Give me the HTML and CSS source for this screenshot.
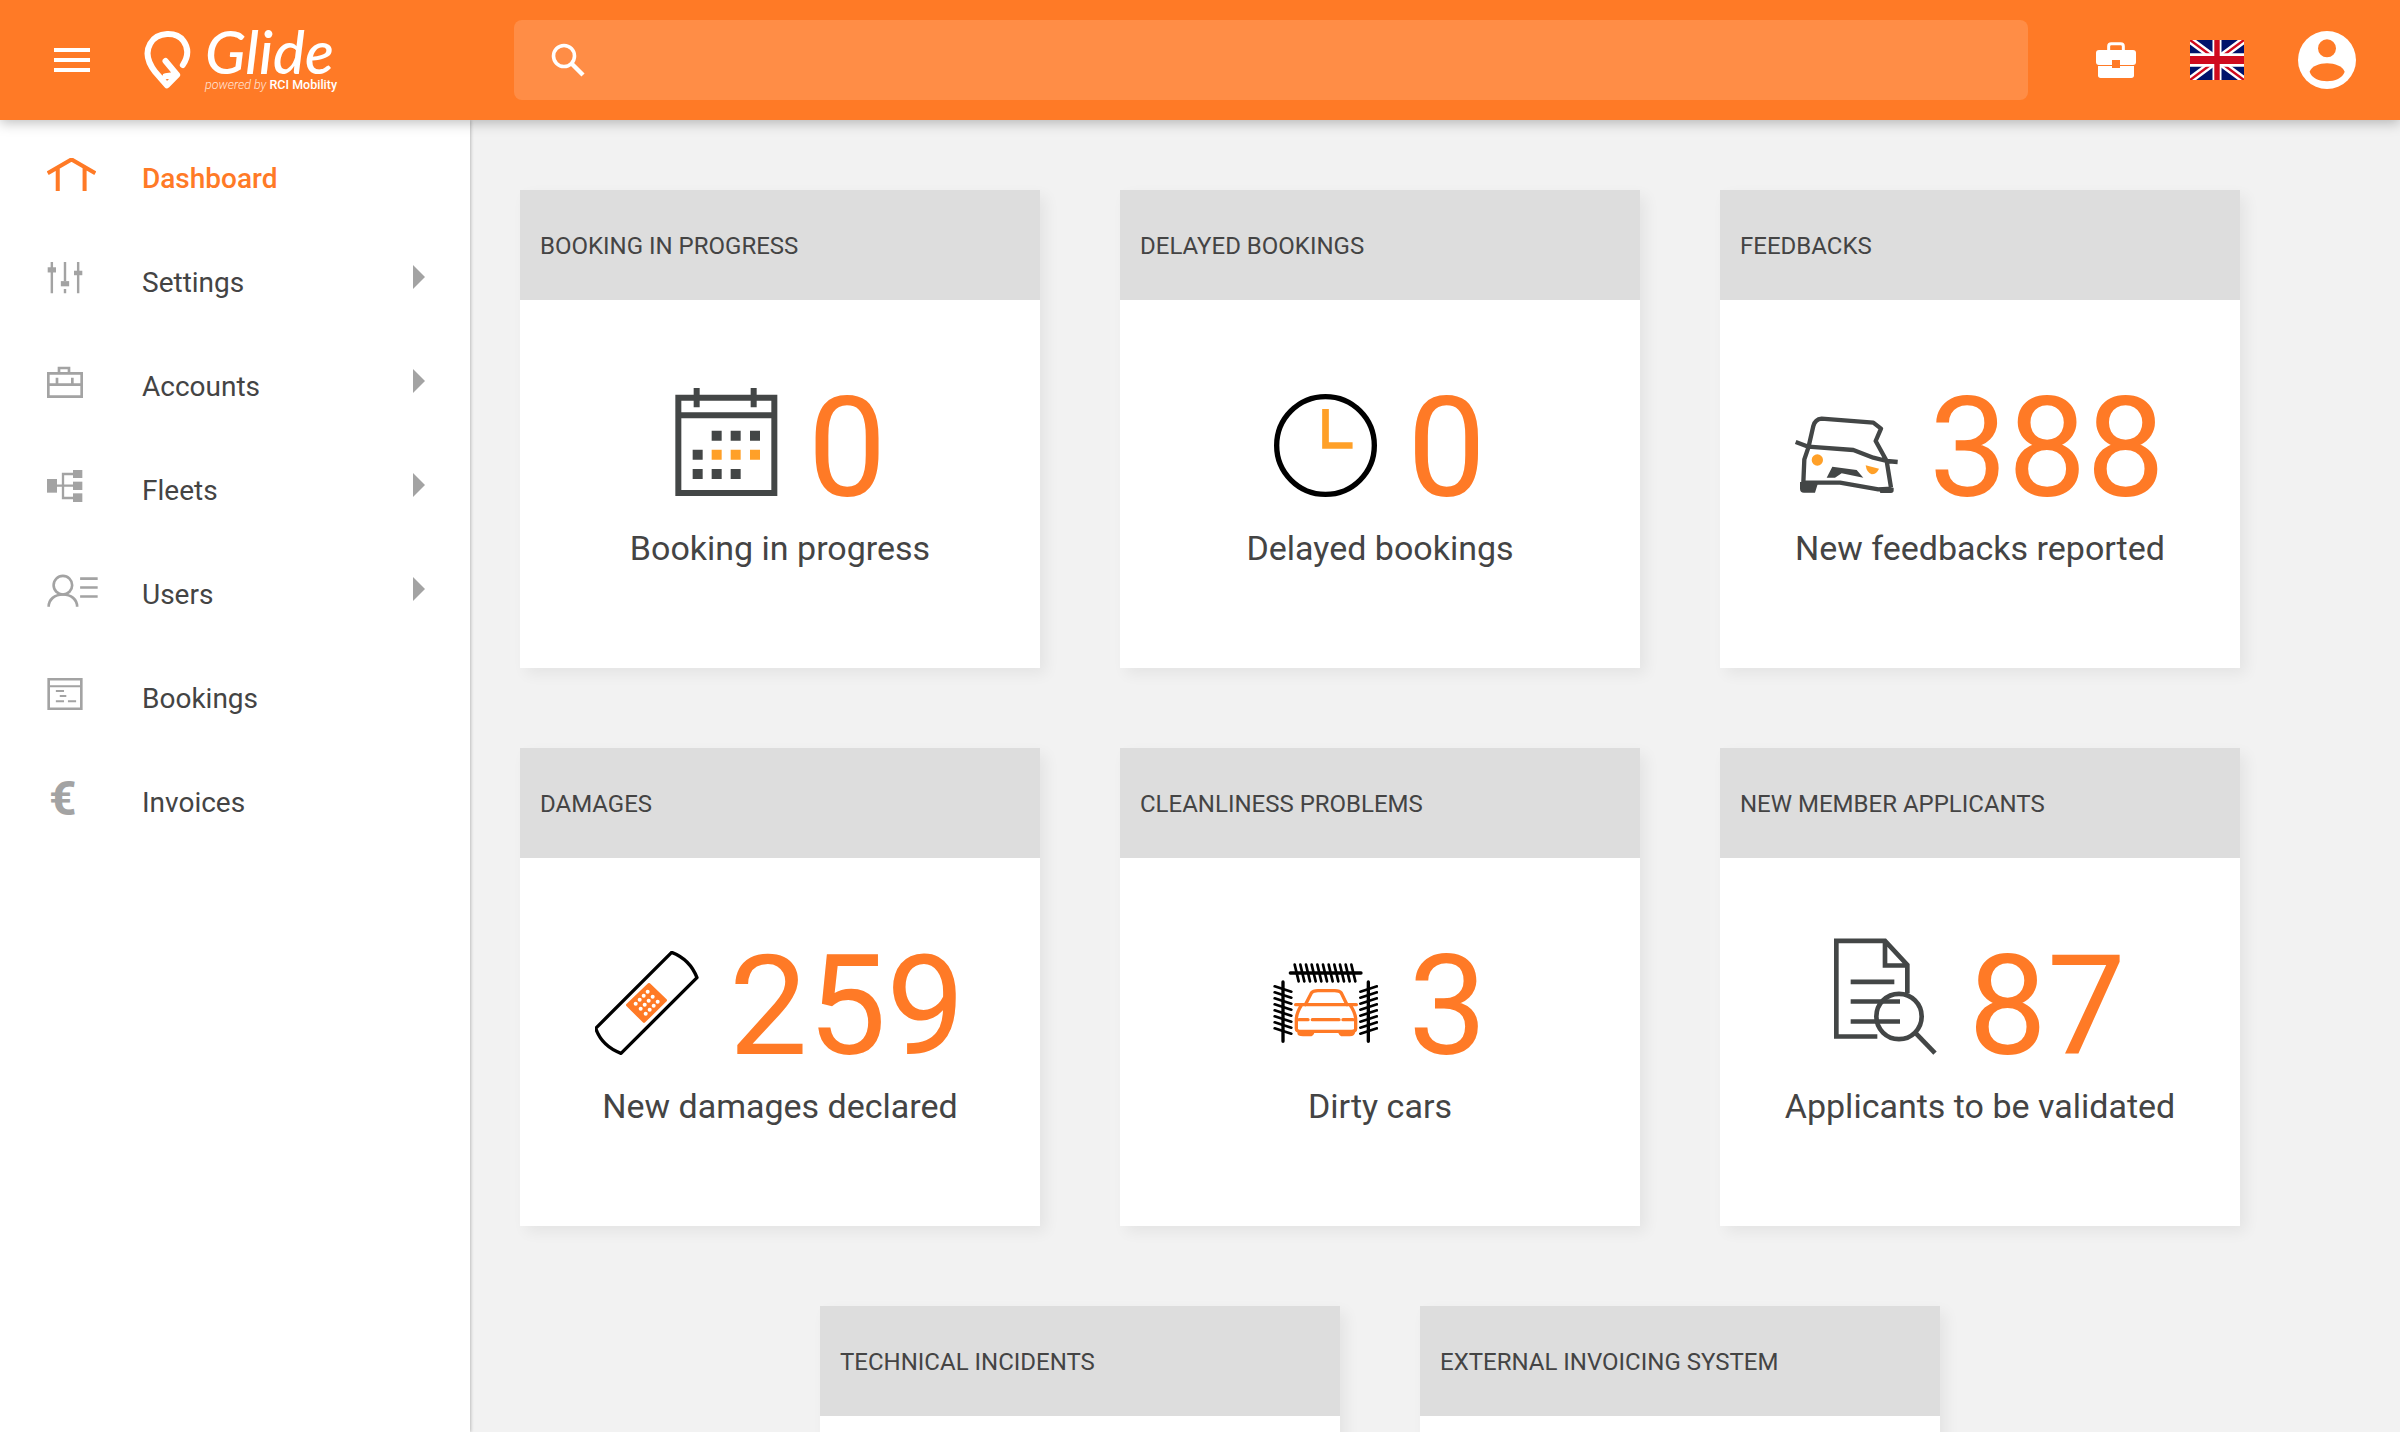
FILE: index.html
```html
<!DOCTYPE html>
<html>

<head>
	<meta charset="utf-8">
	<title>Glide</title>
	<link rel="stylesheet" href="styles.css">
</head>

<body>
	<header class="topbar">
		<div class="burger"><span></span><span></span><span></span></div>
		<div class="logo">
			<svg class="logo-pin" viewBox="432 90 140 180">
				<path d="M548 198C566 170 566 148 550 126C530 98 472 96 450 134C434 162 444 192 466 220L500 259L531 228L496 186M496 232L524 228" fill="none" stroke="#fff" stroke-width="18" stroke-linecap="round" stroke-linejoin="round"/>
			</svg>
			<div class="logo-text">
				<div class="logo-name">Glide</div>
				<div class="logo-sub"><i>powered by</i> <b>RCI Mobility</b></div>
			</div>
		</div>
		<div class="search">
			<svg class="search-icon" viewBox="0 0 34 34">
				<circle cx="13" cy="13" r="10.5" fill="none" stroke="#fff" stroke-width="3.6"/>
				<path d="M20.5 20.5L32 32" stroke="#fff" stroke-width="4.4"/>
			</svg>
		</div>
		<svg class="top-case" viewBox="438 126 120 108">
			<path d="M476 152V139Q476 131 484 131H512Q520 131 520 139V152" fill="none" stroke="#fff" stroke-width="9"/>
			<rect x="438" y="150" width="120" height="45" rx="9" fill="#fff"/>
			<path d="M444 198H552V226Q552 234 544 234H452Q444 234 444 226Z" fill="#fff"/>
			<rect x="486" y="180" width="24" height="24" fill="#ff7a26"/>
		</svg>
		<svg class="flag" viewBox="0 0 60 30" preserveAspectRatio="none">
			<rect width="60" height="30" fill="#00126b"/>
			<path d="M0 0L60 30M60 0L0 30" stroke="#fff" stroke-width="6"/>
			<path d="M0 0L30 15M60 30L30 15M60 0L30 15M0 30L30 15" stroke="#cf0a1e" stroke-width="2"/>
			<path d="M30 0V30M0 15H60" stroke="#fff" stroke-width="10"/>
			<path d="M30 0V30M0 15H60" stroke="#cf0a1e" stroke-width="6"/>
		</svg>
		<svg class="avatar" viewBox="1044 90 174 174">
			<circle cx="1131" cy="177" r="87" fill="#fff"/>
			<circle cx="1131" cy="142" r="27" fill="#ff7a26"/>
			<path d="M1079 212C1090 178 1172 178 1184 212C1172 250 1090 250 1079 212Z" fill="#ff7a26"/>
		</svg>
	</header>

	<div class="page">
		<nav class="sidebar">
			<a class="nav-item active">
				<span class="nav-icon">
					<svg class="ico-home" viewBox="85 85 146 98">
						<path d="M87 130L158 89L229 130M117 112V183M197 112V183" fill="none" stroke="#ff7a26" stroke-width="12"/>
					</svg>
				</span>
				<span class="nav-label">Dashboard</span>
			</a>
			<a class="nav-item">
				<span class="nav-icon">
					<svg class="ico-gray" viewBox="80 400 104 92">
						<path d="M94 400V490M132 400V455M132 478V490M170 400V490" fill="none" stroke="#a3a3a3" stroke-width="7"/>
						<rect x="82" y="415" width="24" height="15" fill="#a3a3a3"/>
						<rect x="120" y="455" width="24" height="15" fill="#a3a3a3"/>
						<rect x="158" y="425" width="24" height="13" fill="#a3a3a3"/>
					</svg>
				</span>
				<span class="nav-label">Settings</span>
				<span class="nav-arrow"></span>
			</a>
			<a class="nav-item">
				<span class="nav-icon">
					<svg class="ico-gray" viewBox="82 710 108 96">
						<path d="M86 732H186V802H86ZM118 732V716H148V732M88 766H184M112 745V762M158 745V762" fill="none" stroke="#a3a3a3" stroke-width="8"/>
					</svg>
				</span>
				<span class="nav-label">Accounts</span>
				<span class="nav-arrow"></span>
			</a>
			<a class="nav-item">
				<span class="nav-icon">
					<svg class="ico-gray" viewBox="82 60 108 96">
						<path d="M112 107H160M160 72H130V144H160" fill="none" stroke="#a3a3a3" stroke-width="7"/>
						<rect x="82" y="87" width="30" height="41" fill="#a3a3a3"/>
						<rect x="160" y="60" width="28" height="24" fill="#a3a3a3"/>
						<rect x="160" y="95" width="28" height="25" fill="#a3a3a3"/>
						<rect x="160" y="130" width="28" height="26" fill="#a3a3a3"/>
					</svg>
				</span>
				<span class="nav-label">Fleets</span>
				<span class="nav-arrow"></span>
			</a>
			<a class="nav-item">
				<span class="nav-icon">
					<svg class="ico-users" viewBox="82 372 154 98">
						<circle cx="130" cy="405" r="28" fill="none" stroke="#a3a3a3" stroke-width="8"/>
						<path d="M87 470C87 448 105 433 130 433C155 433 173 448 173 470M182 385H235M182 412H235M182 439H235" fill="none" stroke="#a3a3a3" stroke-width="8"/>
					</svg>
				</span>
				<span class="nav-label">Users</span>
				<span class="nav-arrow"></span>
			</a>
			<a class="nav-item">
				<span class="nav-icon">
					<svg class="ico-gray" viewBox="82 685 108 98">
						<path d="M86 689H186V779H86Z" fill="none" stroke="#a3a3a3" stroke-width="8"/>
						<path d="M90 710H182M108 725H133M120 740H140M108 756H133M145 756H170" fill="none" stroke="#a3a3a3" stroke-width="6"/>
					</svg>
				</span>
				<span class="nav-label">Bookings</span>
			</a>
			<a class="nav-item">
				<span class="nav-icon"><span class="ico-euro">€</span></span>
				<span class="nav-label">Invoices</span>
			</a>
		</nav>

		<main class="content">
			<section class="card">
				<h3 class="card-title">BOOKING IN PROGRESS</h3>
				<div class="card-body">
					<div class="stat">
						<svg class="stat-icon icon-cal" width="104" height="110" viewBox="100 80 312 328">
							<path d="M113 111H401V397H113ZM113 164H401M168 82V140M339 82V140" fill="none" stroke="#434646" stroke-width="18"/>
							<path d="M213 210h30v30h-30zM270 210h30v30h-30zM328 210h30v30h-30zM156 267h30v30h-30zM156 325h30v30h-30zM213 325h30v30h-30zM270 325h30v30h-30z" fill="#434646"/>
							<path d="M213 267h30v30h-30zM270 267h30v30h-30zM328 267h30v30h-30z" fill="#ffa028"/>
						</svg>
						<span class="stat-value">0</span>
					</div>
					<p class="stat-label">Booking in progress</p>
				</div>
			</section>

			<section class="card">
				<h3 class="card-title">DELAYED BOOKINGS</h3>
				<div class="card-body">
					<div class="stat">
						<svg class="stat-icon" width="103" height="103" viewBox="105 68 308 308">
							<circle cx="259" cy="222" r="146" fill="none" stroke="#000" stroke-width="16"/>
							<path d="M259 113V222H340" fill="none" stroke="#ffa028" stroke-width="20"/>
						</svg>
						<span class="stat-value">0</span>
					</div>
					<p class="stat-label">Delayed bookings</p>
				</div>
			</section>

			<section class="card">
				<h3 class="card-title">FEEDBACKS</h3>
				<div class="card-body">
					<div class="stat">
						<svg class="stat-icon icon-car" width="104" height="78" viewBox="110 80 312 234">
							<path d="M150 175L165 110Q170 90 190 88L345 100L368 118L352 155L385 215M112 158L150 172L285 182L345 205L385 215L418 218M150 175L138 210L135 280M385 215L398 295M135 280H245L360 300L400 298" fill="none" stroke="#434646" stroke-width="13" stroke-linejoin="round"/>
							<path d="M125 278H180L170 310H137Q125 310 125 298ZM360 295H406V303Q406 311 398 311H366ZM205 265L222 232L295 242L315 265L250 252L230 265Z" fill="#434646"/>
							<circle cx="177" cy="212" r="17" fill="#ffa028"/>
							<path d="M322 228L362 238Q355 255 340 255Q325 250 322 228Z" fill="#ffa028"/>
						</svg>
						<span class="stat-value">388</span>
					</div>
					<p class="stat-label">New feedbacks reported</p>
				</div>
			</section>

			<section class="card">
				<h3 class="card-title">DAMAGES</h3>
				<div class="card-body">
					<div class="stat">
						<svg class="stat-icon" width="104" height="104" viewBox="50 60 312 312">
							<path d="M280 64Q335 85 356 140L128 367Q70 345 52 292Z" fill="none" stroke="#000" stroke-width="10" stroke-linejoin="round"/>
							<path d="M212 160L262 208L197 272L147 222Z" fill="#ff7a26" stroke="#ff7a26" stroke-width="8" stroke-linejoin="round"/>
							<g fill="#fff">
								<circle cx="208" cy="182" r="6"/><circle cx="223" cy="197" r="6"/><circle cx="238" cy="212" r="6"/>
								<circle cx="196" cy="194" r="6"/><circle cx="211" cy="209" r="6"/><circle cx="226" cy="224" r="6"/>
								<circle cx="184" cy="206" r="6"/><circle cx="199" cy="221" r="6"/><circle cx="214" cy="236" r="6"/>
								<circle cx="172" cy="218" r="6"/><circle cx="187" cy="233" r="6"/><circle cx="202" cy="248" r="6"/>
							</g>
						</svg>
						<span class="stat-value">259</span>
					</div>
					<p class="stat-label">New damages declared</p>
				</div>
			</section>

			<section class="card">
				<h3 class="card-title">CLEANLINESS PROBLEMS</h3>
				<div class="card-body">
					<div class="stat">
						<svg class="stat-icon" width="105" height="80" viewBox="40 35 315 240">
							<path d="M92 65H304M70 92V270M326 92V270" fill="none" stroke="#000" stroke-width="10" stroke-linecap="round"/>
							<path d="M105 40l12 50M122 40l12 50M139 40l12 50M156 40l12 50M173 40l12 50M190 40l12 50M207 40l12 50M224 40l12 50M241 40l12 50M258 40l12 50M275 40l12 50" fill="none" stroke="#000" stroke-width="8" stroke-linecap="round"/>
							<path d="M45 105l50 16M45 123l50 16M45 141l50 16M45 159l50 16M45 177l50 16M45 195l50 16M45 213l50 16M45 231l50 16M352 105l-50 16M352 123l-50 16M352 141l-50 16M352 159l-50 16M352 177l-50 16M352 195l-50 16M352 213l-50 16M352 231l-50 16" fill="none" stroke="#000" stroke-width="8" stroke-linecap="round"/>
							<path d="M137 160L155 125Q160 118 175 118H225Q240 118 245 125L262 160M108 160H290M125 162Q110 185 110 205V232Q110 240 125 240H275Q288 240 288 232V205Q288 185 272 162M118 205H145M158 205H238M250 205H280M118 240V245Q118 250 130 250H150Q158 250 160 240M240 240Q242 250 250 250H270Q282 250 282 240" fill="none" stroke="#ff7a26" stroke-width="10" stroke-linecap="round"/>
						</svg>
						<span class="stat-value">3</span>
					</div>
					<p class="stat-label">Dirty cars</p>
				</div>
			</section>

			<section class="card">
				<h3 class="card-title">NEW MEMBER APPLICANTS</h3>
				<div class="card-body">
					<div class="stat">
						<svg class="stat-icon icon-doc" width="104" height="117" viewBox="45 50 312 350">
							<path d="M265 215V130L198 58H52V345H175M198 58V132H265M95 181H226M95 240H243M95 300H243" fill="none" stroke="#434646" stroke-width="14"/>
							<circle cx="240" cy="285" r="68" fill="none" stroke="#434646" stroke-width="14"/>
							<path d="M290 335L348 395" fill="none" stroke="#434646" stroke-width="14"/>
						</svg>
						<span class="stat-value">87</span>
					</div>
					<p class="stat-label">Applicants to be validated</p>
				</div>
			</section>

			<section class="card">
				<h3 class="card-title">TECHNICAL INCIDENTS</h3>
				<div class="card-body"></div>
			</section>

			<section class="card">
				<h3 class="card-title">EXTERNAL INVOICING SYSTEM</h3>
				<div class="card-body"></div>
			</section>
		</main>
	</div>
</body>

</html>
```

FILE: styles.css
```css
html, body {
	margin: 0;
	height: 100%;
	overflow: hidden;
}

body {
	font-family: Roboto, "Liberation Sans", sans-serif;
	background-color: #f2f2f2;
	color: #444;
}

/* top bar */
.topbar {
	position: relative;
	z-index: 2;
	display: flex;
	align-items: center;
	height: 120px;
	background-color: #ff7a26;
	box-shadow: 0 3px 12px rgba(0, 0, 0, 0.25);
}

.burger {
	display: flex;
	flex-direction: column;
	gap: 5.5px;
	width: 36px;
	margin-left: 54px;
}

.burger span {
	height: 4.5px;
	background-color: white;
}

.logo {
	display: flex;
	align-items: flex-start;
	width: 370px;
	margin-left: 54px;
	color: white;
}

.logo-pin {
	width: 47px;
	height: 60px;
}

.logo-text {
	margin-left: 14px;
}

.logo-name {
	font-family: Lato, sans-serif;
	font-size: 60px;
	font-style: italic;
	font-weight: 500;
	line-height: 44px;
}

.logo-sub {
	margin-top: 5px;
	font-size: 12.5px;
	line-height: 14px;
	white-space: nowrap;
}

.logo-sub i {
	font-weight: 300;
	opacity: 0.8;
}

.logo-sub b {
	font-weight: 500;
}

.search {
	display: flex;
	align-items: center;
	width: 1514px;
	height: 80px;
	border-radius: 8px;
	background-color: rgba(255, 255, 255, 0.15);
}

.search-icon {
	width: 34px;
	height: 34px;
	margin-left: 37px;
}

.top-case {
	width: 40px;
	height: 36px;
	margin-left: 68px;
}

.flag {
	width: 54px;
	height: 40px;
	margin-left: 54px;
}

.avatar {
	width: 58px;
	height: 58px;
	margin-left: 54px;
}

/* sidebar + content */
.page {
	display: flex;
	height: calc(100% - 120px);
}

.sidebar {
	flex: 0 0 470px;
	box-sizing: border-box;
	padding-top: 6px;
	background-color: white;
	box-shadow: 1px 0 3px rgba(0, 0, 0, 0.22);
}

.nav-item {
	display: flex;
	align-items: center;
	height: 104px;
	padding-left: 47px;
	font-size: 28px;
	color: #444;
}

.nav-item.active {
	color: #ff7a26;
	font-weight: 500;
}

.nav-icon {
	display: flex;
	flex: 0 0 95px;
	margin-top: -8px;
}

.ico-home {
	width: 49px;
	height: 33px;
}

.ico-gray {
	width: 36px;
	height: 32px;
}

.ico-users {
	width: 51px;
	height: 33px;
}

.ico-euro {
	width: 36px;
	padding: 2px 0 0 2px;
	font-size: 48px;
	font-weight: 700;
	line-height: 34px;
	color: #a3a3a3;
}

.nav-label {
	flex: 1;
}

.nav-arrow {
	width: 0;
	height: 0;
	margin: -10px 45px 0 0;
	border-top: 12px solid transparent;
	border-bottom: 12px solid transparent;
	border-left: 12px solid #a3a3a3;
}

.content {
	flex: 0 0 1720px;
	display: flex;
	flex-wrap: wrap;
	justify-content: center;
	align-content: flex-start;
	gap: 80px;
	padding: 70px 0 0 50px;
}

.card {
	width: 520px;
	height: 478px;
	background-color: white;
	box-shadow: 6px 6px 14px rgba(0, 0, 0, 0.06);
}

.card-title {
	height: 110px;
	margin: 0;
	padding-left: 20px;
	background-color: #ddd;
	font-size: 24px;
	font-weight: 400;
	line-height: 112px;
	color: #444;
}

.card-body {
	padding-top: 73px;
	text-align: center;
}

.stat {
	display: flex;
	align-items: center;
	justify-content: center;
	gap: 30px;
	height: 144px;
}

.icon-cal {
	margin-top: -6px;
}

.icon-car {
	margin-top: 20px;
}

.icon-doc {
	margin-top: -14px;
}

.stat-value {
	margin-top: 6px;
	font-size: 140px;
	line-height: 144px;
	color: #ff7a26;
}

.stat-label {
	margin: 0;
	font-size: 34px;
	line-height: 62px;
	color: #444;
}
```
